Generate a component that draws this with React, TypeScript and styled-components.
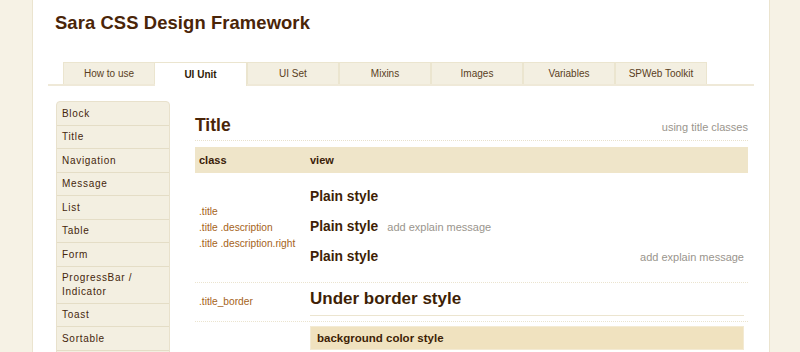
import styled, { createGlobalStyle } from 'styled-components'

const GlobalStyle = createGlobalStyle`
	html, body {
		margin: 0;
		padding: 0;
		background: #f6f2e5;
		font-family: "Liberation Sans", Arial, sans-serif;
		color: #4a2a0e;
	}
`

const Shell = styled.div`
	margin: 0 30px 0 32px;
	min-height: 352px;
	background: #fff;
	border-left: 1px solid #ebe4cf;
	border-right: 1px solid #ebe4cf;
	box-sizing: border-box;
	padding: 0 15px 0 15px;
`

const Heading = styled.h1`
	margin: 0;
	padding: 12px 0 0 7px;
	height: 50px;
	box-sizing: border-box;
	font-size: 18.4px;
	font-weight: bold;
	color: #4a2508;
	letter-spacing: 0.1px;
`

const TabBar = styled.div`
	display: flex;
	padding: 0 0 0 15px;
	margin-top: 12px;
	border-bottom: 2px solid #efe9d8;
	height: 22px;
`

const Tab = styled.div<{ $active?: boolean }>`
	width: 92px;
	height: ${(p) => (p.$active ? '24px' : '22px')};
	box-sizing: border-box;
	display: flex;
	align-items: center;
	justify-content: center;
	font-size: 10px;
	font-weight: ${(p) => (p.$active ? 'bold' : 'normal')};
	color: ${(p) => (p.$active ? '#2e1a08' : '#5a3e22')};
	background: ${(p) => (p.$active ? '#fff' : '#f3efe1')};
	border: 1px solid #ebe5cf;
	border-bottom: none;
	border-left-width: ${(p) => (p.$active ? '0' : '1px')};
`

const Body = styled.div`
	display: flex;
	gap: 25px;
	padding: 15px 6px 0 8px;
`

const Side = styled.ul`
	list-style: none;
	margin: 0;
	padding: 0;
	width: 114px;
	flex-shrink: 0;
	background: #f3efe1;
	border: 1px solid #e8e1cc;
	border-radius: 4px 4px 0 0;
	box-sizing: border-box;
`

const SideItem = styled.li`
	padding: 4.5px 5px;
	font-size: 10px;
	line-height: 13.5px;
	min-height: 13.5px;
	letter-spacing: 0.7px;
	color: #45260c;
	border-bottom: 1px solid #e4ddc6;
`

const Main = styled.div`
	flex: 1;
`

const SectionHead = styled.div`
	display: flex;
	justify-content: space-between;
	align-items: flex-end;
	height: 40px;
	padding-bottom: 5px;
	box-sizing: border-box;
	border-bottom: 1px dotted #e8e1cc;
`

const SectionTitle = styled.h2`
	margin: 0;
	font-size: 17.5px;
	font-weight: bold;
	color: #4a2508;
	line-height: 20px;
`

const Note = styled.span`
	font-size: 11px;
	color: #9a958d;
	line-height: 14px;
	padding-bottom: 1px;
`

const Table = styled.div`
	margin-top: 6px;
`

const HeadRow = styled.div`
	display: grid;
	grid-template-columns: 111px 1fr;
	height: 26px;
	align-items: center;
	background: #efe5c9;
	font-size: 11px;
	font-weight: bold;
	color: #3a2008;
	padding-left: 4px;
`

const Row = styled.div<{ $h: number }>`
	display: grid;
	grid-template-columns: 111px 1fr;
	height: ${(p) => p.$h}px;
	align-items: center;
	border-bottom: 1px dotted #ebe4cf;
	padding-left: 4px;
`

const ClassList = styled.div`
	display: flex;
	flex-direction: column;
	gap: 2.5px;
	font-size: 10.2px;
	line-height: 13.5px;
	color: #a5631a;
`

const ViewCol = styled.div`
	display: flex;
	flex-direction: column;
	gap: 12px;
	padding-right: 4px;
	margin-top: -2px;
`

const Sample = styled.div<{ $right?: boolean }>`
	display: flex;
	align-items: baseline;
	justify-content: ${(p) => (p.$right ? 'space-between' : 'flex-start')};
	gap: 9px;
	font-size: 13.8px;
	font-weight: bold;
	color: #3e1f06;
	line-height: 18px;
`

const Explain = styled.span`
	font-size: 11px;
	font-weight: normal;
	color: #9a958d;
`

const BorderSample = styled.div`
	font-size: 17px;
	font-weight: bold;
	color: #3e1f06;
	padding-bottom: 6px;
	margin-right: 4px;
	border-bottom: 1px solid #ece5d0;
	margin-top: 1px;
`

const BgSample = styled.div`
	grid-column: 2;
	background: #f0e2bf;
	border: 1px solid #f3ead3;
	height: 22px;
	display: flex;
	align-items: center;
	padding-left: 6px;
	margin-right: 4px;
	font-size: 11.5px;
	font-weight: bold;
	color: #3e1f06;
`

const BgRow = styled.div`
	display: grid;
	grid-template-columns: 111px 1fr;
	padding: 4px 0 0 4px;
`

const tabs = ['How to use', 'UI Unit', 'UI Set', 'Mixins', 'Images', 'Variables', 'SPWeb Toolkit']
const sideItems = ['Block', 'Title', 'Navigation', 'Message', 'List', 'Table', 'Form', 'ProgressBar / Indicator', 'Toast', 'Sortable', '']

export default function App() {
	return (
		<>
			<GlobalStyle />
			<Shell>
				<Heading>Sara CSS Design Framework</Heading>
				<TabBar>
					{tabs.map((t) => (
						<Tab key={t} $active={t === 'UI Unit'}>
							{t}
						</Tab>
					))}
				</TabBar>
				<Body>
					<Side>
						{sideItems.map((s, i) => (
							<SideItem key={i}>{s}</SideItem>
						))}
					</Side>
					<Main>
						<SectionHead>
							<SectionTitle>Title</SectionTitle>
							<Note>using title classes</Note>
						</SectionHead>
						<Table>
							<HeadRow>
								<span>class</span>
								<span>view</span>
							</HeadRow>
							<Row $h={109}>
								<ClassList>
									<span>.title</span>
									<span>.title .description</span>
									<span>.title .description.right</span>
								</ClassList>
								<ViewCol>
									<Sample>Plain style</Sample>
									<Sample>
										Plain style<Explain>add explain message</Explain>
									</Sample>
									<Sample $right>
										Plain style<Explain>add explain message</Explain>
									</Sample>
								</ViewCol>
							</Row>
							<Row $h={38}>
								<ClassList>
									<span>.title_border</span>
								</ClassList>
								<BorderSample>Under border style</BorderSample>
							</Row>
							<BgRow>
								<BgSample>background color style</BgSample>
							</BgRow>
						</Table>
					</Main>
				</Body>
			</Shell>
		</>
	)
}
